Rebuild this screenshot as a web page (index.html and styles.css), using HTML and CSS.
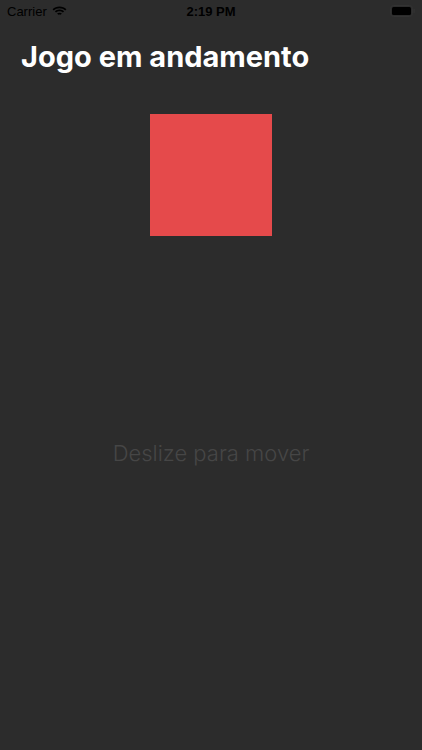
FILE: index.html
```html
<!DOCTYPE html>
<html lang="en">
<head>
    <meta charset="UTF-8">
    <meta name="viewport" content="width=device-width, initial-scale=1.0">
    <title>Jogo em andamento</title>
    <link rel="stylesheet" href="styles.css">
</head>
<body>
    <div class="status-bar">
        <div class="status-left">
            <span>Carrier</span>
            <svg class="wifi" width="15" height="11" viewBox="0 0 15 11">
                <path d="M7.5 2.2c2.2 0 4.2.8 5.7 2.2l1.2-1.2C12.6 1.5 10.2.5 7.5.5S2.4 1.5.6 3.2l1.2 1.2C3.3 3 5.3 2.2 7.5 2.2z" fill="#000"/>
                <path d="M7.5 5.3c1.3 0 2.5.5 3.4 1.3l1.2-1.2C10.9 4.3 9.3 3.6 7.5 3.6S4.1 4.3 2.9 5.4l1.2 1.2c.9-.8 2.1-1.3 3.4-1.3z" fill="#000"/>
                <path d="M7.5 8.4c.5 0 .9.2 1.2.4L7.5 10 6.3 8.8c.3-.2.7-.4 1.2-.4zM7.5 6.7c-.9 0-1.8.4-2.4.9l1.2 1.2.1-.1L7.5 10l1.1-1.3.1.1 1.2-1.2c-.6-.5-1.5-.9-2.4-.9z" fill="#000"/>
            </svg>
        </div>
        <div class="status-time">2:19 PM</div>
        <div class="status-right">
            <svg width="25" height="12" viewBox="0 0 25 12">
                <rect x="0.5" y="0.5" width="22" height="11" rx="3" fill="none" stroke="#333" stroke-width="1"/>
                <rect x="2" y="2" width="19" height="8" rx="1.5" fill="#000"/>
                <rect x="23.5" y="4" width="1.3" height="4" rx="0.6" fill="#333"/>
            </svg>
        </div>
    </div>
    <h1 class="title">Jogo em andamento</h1>
    <div class="game">
        <div class="block"></div>
        <p class="hint">Deslize para mover</p>
    </div>
</body>
</html>
```

FILE: styles.css
```css
body {
    margin: 0;
    padding: 0;
    background-color: #2c2c2c;
    font-family: "Liberation Sans", Arial, sans-serif;
    width: 422px;
    height: 750px;
    overflow: hidden;
}
.status-bar {
    display: flex;
    justify-content: space-between;
    align-items: center;
    height: 22px;
    padding: 0 7px;
    font-size: 13px;
    color: #000;
}
.status-left {
    display: flex;
    align-items: center;
    gap: 5px;
    width: 100px;
}
.status-time {
    font-weight: bold;
    font-size: 13px;
}
.status-right {
    display: flex;
    justify-content: flex-end;
    width: 100px;
}
.title {
    margin: 18px 0 0 21px;
    font-family: Inter, "Liberation Sans", sans-serif;
    font-size: 29px;
    font-weight: bold;
    color: #fff;
    line-height: 34px;
}
.game {
    display: flex;
    flex-direction: column;
    align-items: center;
    padding-top: 40px;
}
.block {
    width: 122px;
    height: 122px;
    background-color: #e54a4b;
}
.hint {
    margin: 204px 0 0;
    font-family: Inter, "Liberation Sans", sans-serif;
    font-size: 22px;
    font-weight: 300;
    color: #464646;
}
```
